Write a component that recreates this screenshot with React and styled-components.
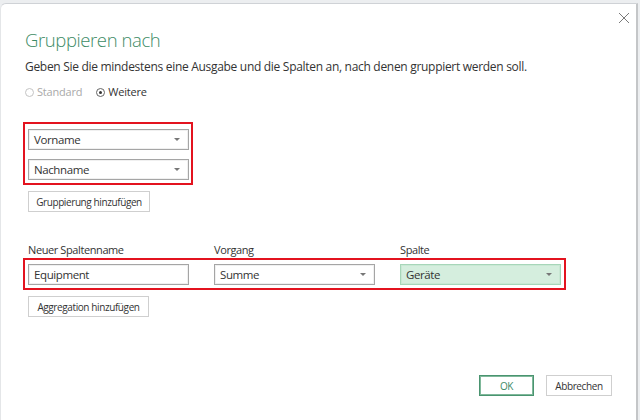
import React from 'react'
import styled, { createGlobalStyle } from 'styled-components'

const GlobalStyle = createGlobalStyle`
    html, body {
        margin: 0;
        padding: 0;
        background: #eceef0;
        font-family: "Open Sans", "Liberation Sans", sans-serif;
        color: #333;
    }
`

const Window = styled.div`
    box-sizing: border-box;
    width: 638px;
    height: 417px;
    margin-top: 3px;
    background: #fff;
    border-top: 1px solid #cfd2d6;
    border-left: 1px solid #e4e6e8;
    border-right: 2px solid #c4c6c8;
    border-top-left-radius: 6px;
    display: flex;
    flex-direction: column;
    padding: 0 0 0 24px;
    position: relative;
`

const Close = styled.button`
    position: absolute;
    top: 5px;
    right: 3px;
    width: 18px;
    height: 18px;
    border: none;
    background: none;
    padding: 0;
    display: flex;
    align-items: center;
    justify-content: center;
`

const Title = styled.h1`
    margin: 23px 0 0 0;
    font-weight: 300;
    font-size: 18.5px;
    letter-spacing: -0.4px;
    line-height: 26px;
    color: #3d8b66;
`

const Description = styled.p`
    margin: 5px 0 0 0;
    font-size: 12px;
    letter-spacing: -0.3px;
    line-height: 18px;
    color: #333;
`

const RadioRow = styled.div`
    display: flex;
    gap: 14px;
    margin-top: 8px;
    font-size: 11px;
    letter-spacing: -0.2px;
    line-height: 16px;
`

const Radio = styled.label`
    display: flex;
    align-items: center;
    gap: 3px;
    color: ${p => (p.disabled ? '#a9a9a9' : '#333')};
`

const Dot = styled.span`
    box-sizing: border-box;
    width: 9px;
    height: 9px;
    border-radius: 50%;
    border: 1px solid ${p => (p.disabled ? '#c4c4c4' : '#666')};
    display: flex;
    align-items: center;
    justify-content: center;

    &::after {
        content: '';
        width: 3px;
        height: 3px;
        border-radius: 50%;
        background: ${p => (p.checked ? '#333' : 'transparent')};
    }
`

const Highlight = styled.div`
    box-sizing: border-box;
    border: 2px solid #e3131f;
    display: flex;
    flex-direction: ${p => (p.row ? 'row' : 'column')};
    gap: ${p => (p.row ? '25px' : '9px')};
    padding: ${p => (p.row ? '4px 3px 3px 3px' : '5px 3px 3px 3px')};
    width: ${p => p.width}px;
    margin-left: -2px;
    margin-top: ${p => p.top}px;
`

const Field = styled.div`
    box-sizing: border-box;
    width: 161px;
    height: 21px;
    border: 1px solid ${p => (p.active ? '#a7d6b9' : '#a5a5a5')};
    background: ${p => (p.active ? '#d5eede' : '#fff')};
    box-shadow: inset 0 0 0 1px ${p => (p.active ? '#c9e8d4' : '#f0f0f0')};
    display: flex;
    align-items: center;
    justify-content: space-between;
    padding: 0 8px 0 5px;
    font-size: 11.5px;
    letter-spacing: -0.4px;
    color: #333;
`

const Arrow = styled.span`
    width: 0;
    height: 0;
    border-left: 3px solid transparent;
    border-right: 3px solid transparent;
    border-top: 3px solid #777;
`

const Button = styled.button`
    box-sizing: border-box;
    height: 21px;
    width: ${p => p.width}px;
    border: 1px solid ${p => (p.primary ? '#4a9470' : '#cfcfcf')};
    box-shadow: ${p => (p.primary ? 'inset 0 0 0 1px #7fb89a' : 'none')};
    background: #fff;
    font-family: "Open Sans", "Liberation Sans", sans-serif;
    font-size: 10px;
    letter-spacing: -0.4px;
    white-space: nowrap;
    color: ${p => (p.primary ? '#3d8b66' : '#333')};
    padding: 0;
    margin-top: ${p => p.top || 0}px;
    margin-left: ${p => p.left || 0}px;
`

const Labels = styled.div`
    display: flex;
    gap: 25px;
    margin-top: 31px;
    margin-left: 3px;
    font-size: 11px;
    letter-spacing: -0.4px;
    line-height: 14px;
    color: #333;
`

const Label = styled.span`
    width: 161px;
`

const Footer = styled.div`
    display: flex;
    justify-content: flex-end;
    gap: 12px;
    margin-top: auto;
    margin-bottom: 24px;
    margin-right: 24px;
`

const CloseIcon = () => (
    <svg width="12" height="12" viewBox="0 0 12 12">
        <path d="M1 1 L11 11 M11 1 L1 11" stroke="#7a7a7a" strokeWidth="1" fill="none" />
    </svg>
)

const App = () => (
    <Window>
        <GlobalStyle />
        <Close aria-label="Schließen">
            <CloseIcon />
        </Close>
        <Title>Gruppieren nach</Title>
        <Description>
            Geben Sie die mindestens eine Ausgabe und die Spalten an, nach denen gruppiert werden soll.
        </Description>
        <RadioRow>
            <Radio disabled>
                <Dot disabled />
                Standard
            </Radio>
            <Radio>
                <Dot checked />
                Weitere
            </Radio>
        </RadioRow>

        <Highlight width={170} top={22}>
            <Field>
                Vorname
                <Arrow />
            </Field>
            <Field>
                Nachname
                <Arrow />
            </Field>
        </Highlight>
        <Button width={122} top={6} left={3}>Gruppierung hinzufügen</Button>

        <Labels>
            <Label>Neuer Spaltenname</Label>
            <Label>Vorgang</Label>
            <Label>Spalte</Label>
        </Labels>
        <Highlight row width={543} top={1}>
            <Field>Equipment</Field>
            <Field>
                Summe
                <Arrow />
            </Field>
            <Field active>
                Geräte
                <Arrow />
            </Field>
        </Highlight>
        <Button width={121} top={6} left={3}>Aggregation hinzufügen</Button>

        <Footer>
            <Button primary width={55}>OK</Button>
            <Button width={66}>Abbrechen</Button>
        </Footer>
    </Window>
)

export default App
